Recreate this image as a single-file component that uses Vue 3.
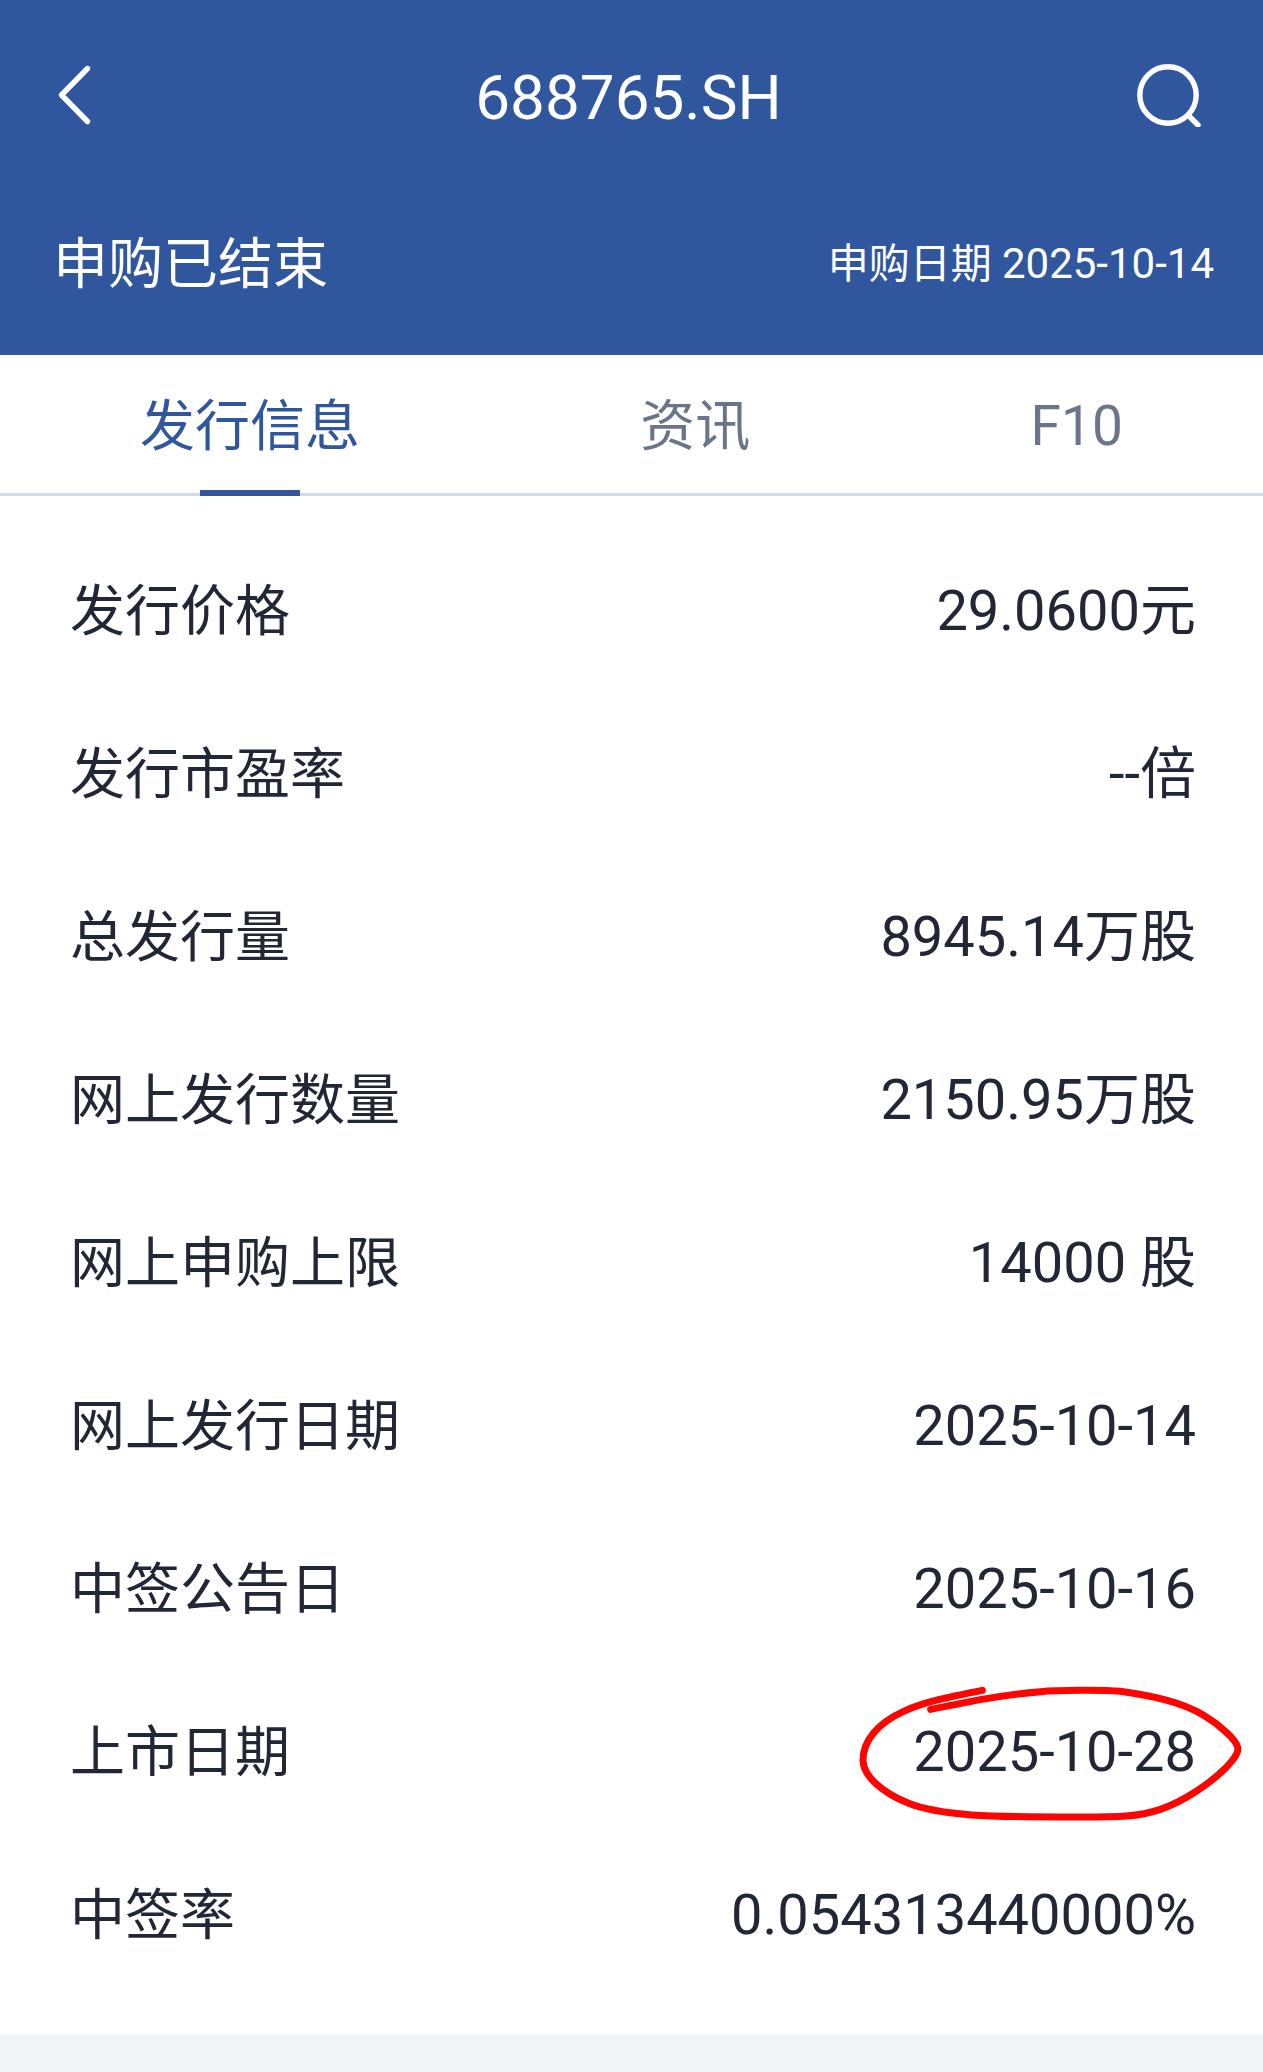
<script setup>
import { ref } from 'vue'

const code = '688765.SH'
const tabs = ['发行信息', '资讯', 'F10']
const active = ref(0)

const rows = [
  { label: '发行价格', value: '29.0600元' },
  { label: '发行市盈率', value: '--倍' },
  { label: '总发行量', value: '8945.14万股' },
  { label: '网上发行数量', value: '2150.95万股' },
  { label: '网上申购上限', value: '14000 股' },
  { label: '网上发行日期', value: '2025-10-14' },
  { label: '中签公告日', value: '2025-10-16' },
  { label: '上市日期', value: '2025-10-28', marked: true },
  { label: '中签率', value: '0.054313440000%' },
]
</script>

<template>
  <div class="page">
    <header class="header">
      <div class="nav">
        <button type="button" class="icon-button back" aria-label="返回">
          <svg width="36" height="64" viewBox="0 0 36 64" fill="none">
            <path d="M31.5 5.5 5.5 32l26 26.5" stroke="currentColor" stroke-width="5.4" stroke-linecap="round" stroke-linejoin="round" />
          </svg>
        </button>
        <h1 class="title">{{ code }}</h1>
        <button type="button" class="icon-button search" aria-label="搜索">
          <svg width="64" height="64" viewBox="0 0 64 64" fill="none" stroke="currentColor" stroke-width="5.4" stroke-linecap="round">
            <circle cx="31" cy="32" r="28.2" />
            <path d="M52 53l9 9" />
          </svg>
        </button>
      </div>
      <div class="status">
        <strong class="state">申购已结束</strong>
        <p class="date">申购日期 <time class="day" datetime="2025-10-14">2025-10-14</time></p>
      </div>
    </header>

    <div class="tabs" role="tablist">
      <button
        v-for="(tab, i) in tabs"
        :key="tab"
        type="button"
        role="tab"
        class="tab"
        :class="{ active: i === active }"
        :aria-selected="i === active"
        @click="active = i"
      >{{ tab }}</button>
    </div>

    <dl class="list">
      <div v-for="row in rows" :key="row.label" class="row">
        <dt class="label">{{ row.label }}</dt>
        <dd class="value">
          {{ row.value }}
          <svg v-if="row.marked" class="ring" viewBox="50 75 1161 414" fill="none" aria-hidden="true">
            <path
              d="M426 91C330 110 250 126 190 154C110 190 68 245 68 300C68 350 130 400 205 430C300 468 450 471 700 471C830 471 890 472 960 448C1030 424 1110 370 1155 325C1185 293 1196 275 1192 262C1188 240 1140 196 1090 166C1020 124 930 107 840 94C790 89 650 90 600 95C490 104 390 124 271 148"
              stroke="#ff0300"
              stroke-width="21"
              stroke-linecap="round"
              stroke-linejoin="round"
            />
          </svg>
        </dd>
      </div>
    </dl>
  </div>
</template>

<style>
body {
  margin: 0;
  background: #f3f4f7;
}
</style>

<style scoped>
.page {
  min-height: 100vh;
  background: #f3f4f7;
  color: #212734;
  font-family: Roboto, "Noto Sans CJK SC", sans-serif;
}

.header {
  padding-bottom: 18px;
  background: #30569e;
  color: #fff;
}

.nav {
  display: grid;
  grid-template-columns: 1fr auto 1fr;
  align-items: center;
  height: 190px;
  padding: 0 62px 0 56px;
}

.icon-button {
  display: flex;
  padding: 0;
  border: 0;
  background: none;
  color: inherit;
  cursor: pointer;
}

.back {
  justify-self: start;
}

.search {
  justify-self: end;
}

.title {
  margin: 0;
  padding-top: 6px;
  font-size: 62px;
  font-weight: 400;
  line-height: 80px;
}

.status {
  display: flex;
  align-items: center;
  justify-content: space-between;
  height: 147px;
  padding: 0 49px 0 53px;
}

.state {
  font-size: 55px;
  font-weight: 400;
  line-height: 80px;
}

.date {
  margin: 0;
  font-size: 41px;
  line-height: 80px;
}

.day {
  font-size: 42px;
}

.tabs {
  display: flex;
  justify-content: space-around;
  border-bottom: 3px solid #d5dbe6;
  background: #fff;
}

.tab {
  position: relative;
  height: 138px;
  padding: 4px 0 0;
  border: 0;
  background: none;
  color: #6b758a;
  font-family: inherit;
  font-size: 55px;
  line-height: 80px;
  cursor: pointer;
}

.tab.active {
  color: #30569e;
}

.tab.active::after {
  content: "";
  position: absolute;
  bottom: -3px;
  left: 50%;
  width: 100px;
  height: 6px;
  margin-left: -50px;
  background: #30569e;
}

.list {
  margin: 0;
  padding: 33px 67px 38px 70px;
  background: #fff;
}

.row {
  display: flex;
  align-items: center;
  justify-content: space-between;
  height: 163px;
  line-height: 80px;
}

.label {
  font-size: 55px;
}

.value {
  position: relative;
  margin: 0;
  font-size: 56px;
}

.ring {
  position: absolute;
  top: -27px;
  right: -48px;
  width: 387px;
  height: 138px;
}
</style>
